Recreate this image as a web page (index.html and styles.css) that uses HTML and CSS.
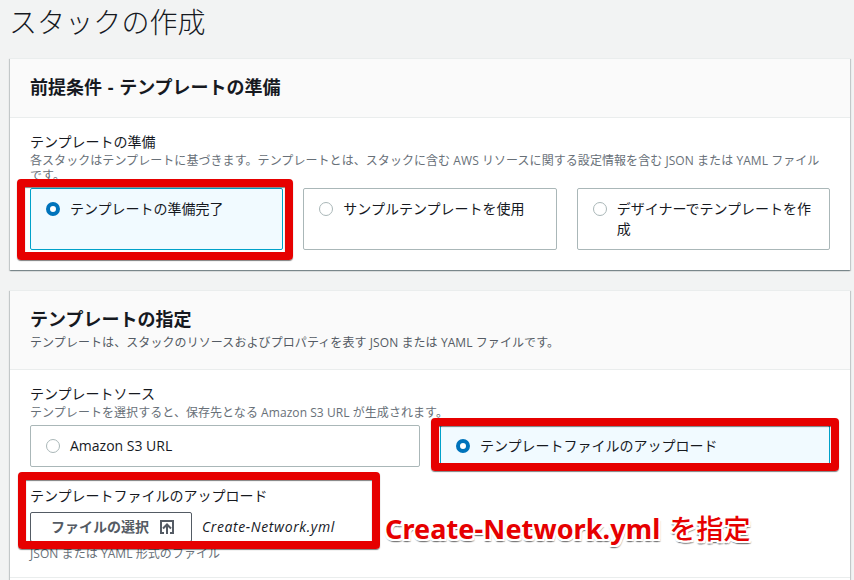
FILE: index.html
```html
<!DOCTYPE html>
<html lang="ja">
<head>
    <meta charset="UTF-8">
    <title>スタックの作成</title>
    <link rel="stylesheet" href="styles.css">
</head>
<body>
    <h1>スタックの作成</h1>

    <div class="card">
        <div class="card-header">
            <h2>前提条件 - テンプレートの準備</h2>
        </div>
        <div class="card-body">
            <div class="label">テンプレートの準備</div>
            <div class="hint">各スタックはテンプレートに基づきます。テンプレートとは、スタックに含む AWS リソースに関する設定情報を含む JSON または YAML ファイル<br>です。</div>
            <div class="tiles three">
                <label class="tile selected"><input type="radio" name="prepare" checked><span>テンプレートの準備完了</span></label>
                <label class="tile"><input type="radio" name="prepare"><span>サンプルテンプレートを使用</span></label>
                <label class="tile"><input type="radio" name="prepare"><span>デザイナーでテンプレートを作成</span></label>
            </div>
        </div>
    </div>

    <div class="card">
        <div class="card-header">
            <h2>テンプレートの指定</h2>
            <p>テンプレートは、スタックのリソースおよびプロパティを表す JSON または YAML ファイルです。</p>
        </div>
        <div class="card-body">
            <div class="label">テンプレートソース</div>
            <div class="hint">テンプレートを選択すると、保存先となる Amazon S3 URL が生成されます。</div>
            <div class="tiles two">
                <label class="tile"><input type="radio" name="source"><span>Amazon S3 URL</span></label>
                <label class="tile selected"><input type="radio" name="source" checked><span>テンプレートファイルのアップロード</span></label>
            </div>
            <div class="upload">
                <div class="label">テンプレートファイルのアップロード</div>
                <div class="file-row">
                    <button type="button">ファイルの選択
                        <svg width="16" height="16" viewBox="0 0 16 16" fill="none" stroke="currentColor" stroke-width="2">
                            <path d="M5 14H2V2h12v12h-3"/>
                            <path d="M8 15V6M4 9.5l4-4 4 4"/>
                        </svg>
                    </button>
                    <span class="file-name">Create-Network.yml</span>
                </div>
                <div class="hint">JSON または YAML 形式のファイル</div>
            </div>
        </div>
        <div class="card-footer"></div>
    </div>

    <div class="mark mark-prepare"></div>
    <div class="mark mark-source"></div>
    <div class="mark mark-file"></div>
    <div class="note"><b>Create-Network.yml</b><span>を指定</span></div>
</body>
</html>
```
FILE: styles.css
```css
* {
    box-sizing: border-box;
}

body {
    position: relative;
    margin: 0;
    padding: 0 4px 0 10px;
    height: 580px;
    overflow: hidden;
    background-color: #f2f3f3;
    color: #16191f;
    font-family: "Open Sans", "Noto Sans CJK JP", sans-serif;
    font-size: 14px;
    line-height: 20px;
}

h1 {
    margin: 0 0 15px -1px;
    padding-top: 2px;
    height: 43px;
    font-size: 28px;
    line-height: 40px;
    font-weight: 300;
    letter-spacing: 0.1px;
}

.card {
    width: 840px;
    height: 212px;
    margin-bottom: 20px;
    background-color: white;
    border-top: 1px solid #eaeded;
    box-shadow: 0 1px 1px 0 rgba(0, 28, 36, 0.3), 1px 1px 1px 0 rgba(0, 28, 36, 0.15), -1px 1px 1px 0 rgba(0, 28, 36, 0.15);
}

.card + .card {
    height: 290px;
    margin-bottom: 0;
}

.card-header {
    padding: 16px 20px 18px;
    background-color: #fafafa;
    border-bottom: 1px solid #eaeded;
}

h2 {
    margin: 0;
    font-size: 18px;
    line-height: 24px;
    font-weight: 700;
    word-spacing: 1px;
}

.card-header p {
    margin: 2px 0 -1px;
    font-size: 12px;
    line-height: 19px;
    letter-spacing: 0.08px;
    color: #545b64;
}

.card-body {
    padding: 14px 20px 0;
}

.label {
    line-height: 20px;
    margin-bottom: 1px;
}

.hint {
    font-size: 12px;
    line-height: 15px;
    letter-spacing: 0.06px;
    color: #687078;
}

.tiles {
    display: grid;
    gap: 20px;
}

.three {
    grid-template-columns: repeat(3, 1fr);
    margin-top: 5px;
}

.two {
    grid-template-columns: repeat(2, 1fr);
    margin-top: 5px;
}

.tile {
    display: flex;
    align-items: flex-start;
    gap: 10px;
    padding: 10px 15px;
    border: 1px solid #aab7b8;
    border-radius: 2px;
}

.tile.selected {
    background-color: #f1faff;
    border-color: #00a1c9;
}

.tile input {
    appearance: none;
    flex: none;
    width: 14px;
    height: 14px;
    margin: 3px 0 0;
    border: 1px solid #aab7b8;
    border-radius: 50%;
    background-color: white;
}

.tile.selected input {
    border: 4px solid #0073bb;
}

.upload {
    margin-top: 19px;
}

.file-row {
    display: flex;
    align-items: center;
    gap: 10px;
    margin: 6px 0 4px;
}

button {
    display: flex;
    align-items: center;
    justify-content: center;
    gap: 10px;
    width: 162px;
    height: 30px;
    padding: 0 0 2px 4px;
    background-color: white;
    border: 1px solid #545b64;
    border-radius: 2px;
    color: #545b64;
    font-family: inherit;
    font-size: 14px;
    font-weight: 700;
}

button svg {
    margin-top: 2px;
}

.file-name {
    font-style: italic;
    letter-spacing: 0.6px;
}

.card-footer {
    margin-top: 16px;
    border-top: 1px solid #eaeded;
}

/* red frames over the form */
.mark {
    position: absolute;
    border: 8px solid #e60000;
    border-radius: 4px;
    box-shadow: 0 1px 1px rgba(0, 0, 0, 0.5), inset 0 1px 1px rgba(0, 0, 0, 0.5);
}

.mark-prepare {
    left: 17px;
    top: 179px;
    width: 276px;
    height: 81px;
}

.mark-source {
    left: 431px;
    top: 418px;
    width: 408px;
    height: 53px;
}

.mark-file {
    left: 18px;
    top: 472px;
    width: 362px;
    height: 77px;
}

.note {
    position: absolute;
    left: 385px;
    top: 509px;
    display: flex;
    gap: 9px;
    font-size: 27px;
    line-height: 40px;
    letter-spacing: 0.1px;
    color: #e60000;
    white-space: nowrap;
    text-shadow: -2px 0 white, 2px 0 white, 0 -2px white, 0 2px white, -1px -1px white, 1px 1px white, 1px -1px white, -1px 1px white, -2px 2px white, 2px 2px white, 0 3px 1px #777, 2px 3px 1px #aaa, -1px 3px 1px #aaa;
}

.note b {
    font-family: "Noto Sans", sans-serif;
}

.note span {
    font-weight: 500;
}
```
